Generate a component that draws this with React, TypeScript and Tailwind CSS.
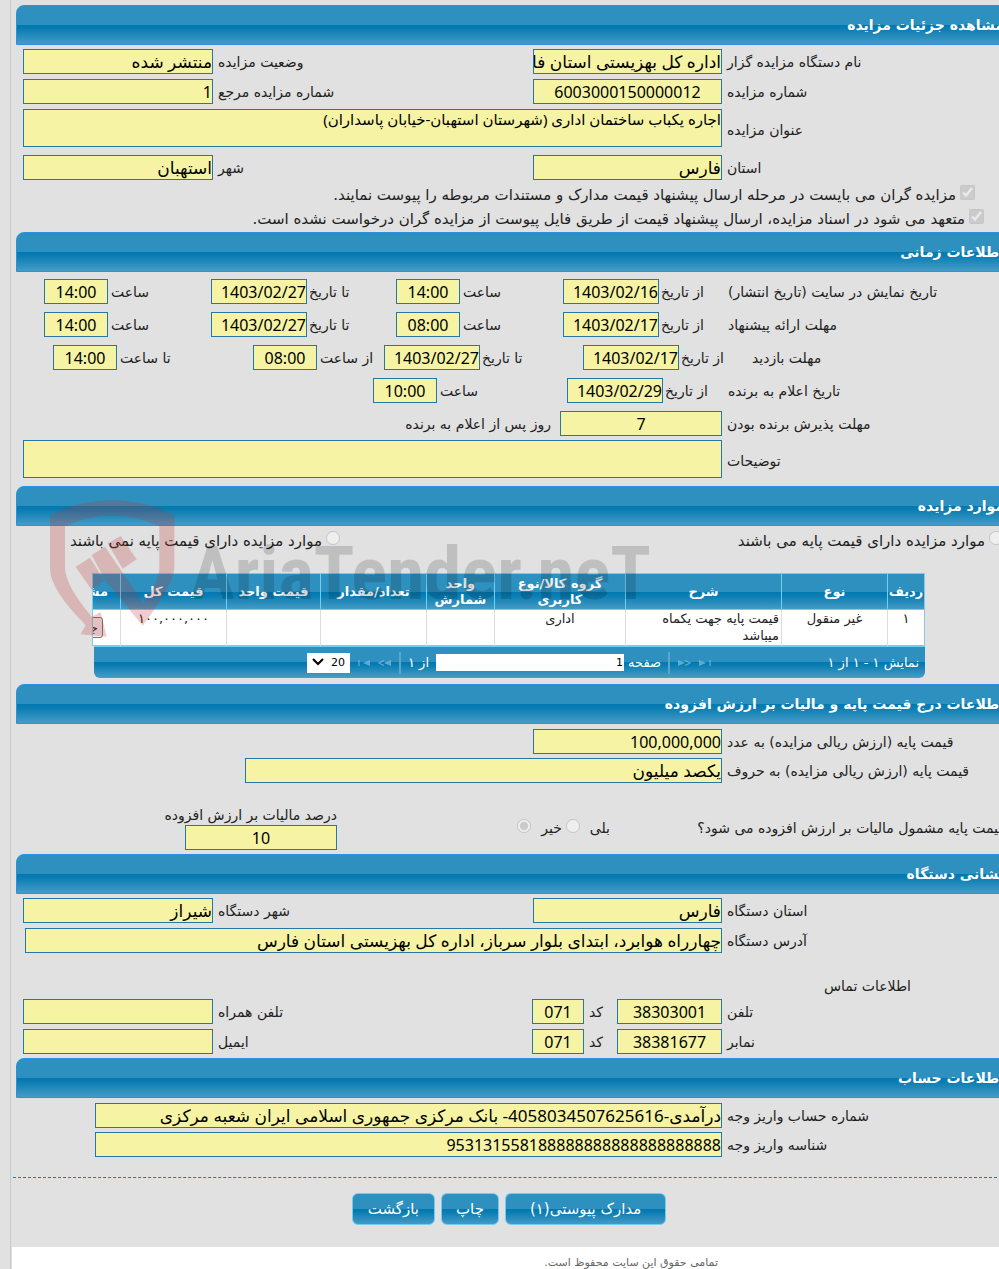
import { useId } from "react"
import clsx from "clsx"

const bar =
  "bg-[linear-gradient(to_bottom,#2e90bf_0%,#2e90bf_49%,#0078b0_50%,#0a7db3_60%,#4a9dc6_100%)] bg-origin-border"
const box =
  "block min-w-0 border border-[#2577a5] bg-[#f6f4a4] text-black outline-none font-['Noto_Sans','DejaVu_Sans',sans-serif]"

const Title = ({ children }: any) => (
  <h2
    dir="rtl"
    className={clsx(
      "h-10 rounded-tl-lg border border-[#2a91e0] pr-1.5 text-[14px] leading-[38px] font-bold whitespace-nowrap text-white",
      bar
    )}
  >
    {children}
  </h2>
)

// a value box with its caption on the right hand side
const Field = ({ label, value = "", width = "w-full", align = "text-right", size = "text-[16px]", gap = "gap-[5px]" }: any) => {
  const id = useId()
  return (
    <div className={clsx("flex items-center", gap)}>
      <input
        id={id}
        dir="rtl"
        readOnly
        value={value}
        className={clsx(box, "h-[25px] shrink-0", width, align, size)}
      />
      <label htmlFor={id} dir="rtl" className="whitespace-nowrap">
        {label}
      </label>
    </div>
  )
}

const Area = ({ label, value = "" }: any) => {
  const id = useId()
  return (
    <div className="grid grid-cols-[699fr_284fr] items-center gap-[5px]">
      <textarea
        id={id}
        dir="rtl"
        readOnly
        value={value}
        className={clsx(box, "h-[38px] w-full resize-none overflow-hidden text-[15px] leading-[18px]")}
      />
      <label htmlFor={id} dir="rtl" className="pt-1 text-left">
        {label}
      </label>
    </div>
  )
}

const Pair = ({ left, right }: any) => (
  <div className="grid grid-cols-[510fr_478fr]">
    <div>{left}</div>
    <div>{right}</div>
  </div>
)

const Time = ({ label, value }: any) => (
  <Field label={label} value={value} width="w-16" align="text-center" gap="gap-[3px]" />
)
const Day = ({ label, value }: any) => (
  <Field label={label} value={value} width="w-24" gap="gap-[2px]" />
)

const columns = [
  { name: "ردیف", width: "w-[37px]" },
  { name: "نوع", width: "w-[106px]" },
  { name: "شرح", width: "w-[156px]" },
  { name: "گروه کالا/نوع کاربری", width: "w-[131px]" },
  { name: "واحد شمارش", width: "w-[68px]" },
  { name: "تعداد/مقدار", width: "w-[106px]" },
  { name: "قیمت واحد", width: "w-[94px]" },
  { name: "قیمت کل", width: "w-[106px]" },
  { name: "مشخصات", width: "w-[28px]" },
]
const row = ["۱", "غیر منقول", "قیمت پایه جهت یکماه میباشد", "اداری", "", "", "", "۱۰۰,۰۰۰,۰۰۰"]

const Step = ({ label, flip, end }: any) => (
  <button type="button" disabled aria-label={label}>
    <svg viewBox="0 0 14 8" className={clsx("h-2 w-3.5", flip && "-scale-x-100")}>
      <path d="M13 1v6L6 4z" fill="#7fc0df" opacity=".7" />
      <path d={end ? "M2 1v6" : "M6 1.500L1 4l5 2.500"} fill="none" stroke="#7fc0df" strokeWidth="1.300" opacity=".7" />
    </svg>
  </button>
)

const Watermark = () => (
  <div className="pointer-events-none absolute top-[4px] left-[24px] flex">
    <svg viewBox="0 0 450 465" className="h-[155px] w-[150px]" fill="#be3232" opacity=".24">
      <path d="M30 75Q215-15 403 75V235Q400 285 308 407L195 270L155 195L195 170L310 340Q358 270 358 235V108Q215 45 75 108V235Q78 290 155 380L182 366L200 440L122 433L137 405Q30 300 30 235Z" />
      <path d="M107 230L150 203L193 272L155 300ZM203 160L242 138L290 208L248 236Z" />
    </svg>
    <span className="mt-[46px] font-['Liberation_Sans_Narrow','Roboto_Condensed',sans-serif] text-[75px] leading-none font-bold text-black/15">
      AriaTender.neT
    </span>
  </div>
)

const Check = ({ children, pad }: any) => (
  <label dir="rtl" className={clsx("flex h-6 items-center gap-1 text-[15px] whitespace-nowrap", pad)}>
    <input type="checkbox" disabled defaultChecked className="mb-1.5 size-[15px]" />
    {children}
  </label>
)

const Radio = ({ children, name }: any) => (
  <label dir="rtl" className="flex items-center gap-1 text-[15px] whitespace-nowrap">
    <input type="radio" name={name} disabled className="mb-1.5 size-[14px]" />
    {children}
  </label>
)

const Push = ({ children, pad }: any) => (
  <button
    type="button"
    className={clsx(
      "h-8 rounded-md border border-[#6fcdf2] text-[15px] text-white",
      bar,
      pad
    )}
  >
    {children}
  </button>
)

const App = () => {
  return (
    <div className="min-h-screen overflow-hidden bg-[#e1e1e1] pl-[10px] font-['DejaVu_Sans',sans-serif] text-[14px] leading-5 text-[#222]">
      <div className="border-l border-[#c8c8c8]">
        <main className="-mr-3 pt-[5px] pl-[5px]">
          <Title>مشاهده جزئیات مزایده</Title>
          <section className="flex flex-col gap-[5px] pt-1 pl-[7px]">
            <Pair
              left={<Field label="وضعیت مزایده" value="منتشر شده" width="w-[190px]" size="text-[17px]" />}
              right={<Field label="نام دستگاه مزایده گزار" value="اداره کل بهزیستی استان فارس" width="w-[189px]" size="text-[17px]" />}
            />
            <Pair
              left={<Field label="شماره مزایده مرجع" value="1" width="w-[190px]" />}
              right={<Field label="شماره مزایده" value="6003000150000012" width="w-[189px]" align="text-center" />}
            />
            <Area label="عنوان مزایده" value="اجاره یکباب ساختمان اداری (شهرستان استهبان-خیابان پاسداران)" />
            <div className="pt-[3px]">
              <Pair
                left={<Field label="شهر" value="استهبان" width="w-[190px]" size="text-[17px]" />}
                right={<Field label="استان" value="فارس" width="w-[189px]" size="text-[17px]" />}
              />
            </div>
          </section>
          <div className="pt-[3px] pb-px">
            <Check pad="pr-9">مزایده گران می بایست در مرحله ارسال پیشنهاد قیمت مدارک و مستندات مربوطه را پیوست نمایند.</Check>
            <Check pad="pr-[27px]">متعهد می شود در اسناد مزایده، ارسال پیشنهاد قیمت از طریق فایل پیوست از مزایده گران درخواست نشده است.</Check>
          </div>

          <Title>اطلاعات زمانی</Title>
          <section className="flex flex-col gap-2 pt-[7px] pl-[7px]">
            {[
              ["تاریخ نمایش در سایت (تاریخ انتشار)", "1403/02/16", "14:00"],
              ["مهلت ارائه پیشنهاد", "1403/02/17", "08:00"],
            ].map(([name, from, hour]) => (
              <div key={name} className="grid grid-cols-[167fr_185fr_167fr_165fr_283fr] items-center pl-[21px]">
                <Time label="ساعت" value="14:00" />
                <Day label="تا تاریخ" value="1403/02/27" />
                <Time label="ساعت" value={hour} />
                <Day label="از تاریخ" value={from} />
                <span dir="rtl" className="text-left">{name}</span>
              </div>
            ))}
            <div className="grid grid-cols-[200fr_131fr_199fr_169fr_259fr] items-center pl-[30px]">
              <Time label="تا ساعت" value="14:00" />
              <Time label="از ساعت" value="08:00" />
              <Day label="تا تاریخ" value="1403/02/27" />
              <Day label="از تاریخ" value="1403/02/17" />
              <span dir="rtl" className="text-left">مهلت بازدید</span>
            </div>
            <div className="grid grid-cols-[350fr_194fr_161fr_283fr] items-center">
              <span />
              <Time label="ساعت" value="10:00" />
              <Day label="از تاریخ" value="1403/02/29" />
              <span dir="rtl" className="text-left">تاریخ اعلام به برنده</span>
            </div>
            <div className="grid grid-cols-[528fr_451fr] items-center gap-[9px]">
              <span dir="rtl" className="text-right">روز پس از اعلام به برنده</span>
              <Field label="مهلت پذیرش برنده بودن" value="7" width="w-[162px]" align="text-center" />
            </div>
          </section>
          <div className="pt-1 pb-2 pl-[7px]">
            <Area label="توضیحات" />
          </div>

          <div className="relative">
            <Title>موارد مزایده</Title>
            <div dir="rtl" className="flex justify-between pt-[5px] pr-2 pl-[54px]">
              <div className="flex-[673]">
                <Radio name="base">موارد مزایده دارای قیمت پایه می باشند</Radio>
              </div>
              <div className="flex-[262]">
                <Radio name="base">موارد مزایده دارای قیمت پایه نمی باشند</Radio>
              </div>
            </div>
            <div className="mt-[22px] mr-[86px] mb-[6px] ml-[76px]">
              <table dir="rtl" className="w-full table-fixed border-collapse border border-[#8cc4e4] text-[13px]">
                <thead>
                  <tr className={clsx("h-9", bar)}>
                    {columns.map((c) => (
                      <th
                        key={c.name}
                        className={clsx("overflow-hidden border-b border-l border-[#6fd0f5] p-0 leading-4 font-bold text-white", c.width)}
                      >
                        {c.name === "مشخصات" ? <div className="pr-3 text-right whitespace-nowrap">{c.name}</div> : c.name}
                      </th>
                    ))}
                  </tr>
                </thead>
                <tbody>
                  <tr className="h-9 bg-white">
                    {row.map((cell, i) => (
                      <td
                        key={i}
                        className={clsx("border-l border-[#ddd] px-0.5 py-0 align-top leading-[17px]", i === 2 ? "text-right" : "text-center")}
                      >
                        {cell}
                      </td>
                    ))}
                    <td className="overflow-hidden p-0 pr-[17px] text-right">
                      <button type="button" className="h-[21px] rounded-[3px] border border-[#767676] bg-[#efefef] px-1 whitespace-nowrap">
                        جزئیات
                      </button>
                    </td>
                  </tr>
                </tbody>
              </table>
              <div className={clsx("ml-0.5 grid h-8 grid-cols-[1fr_auto_1fr] items-center rounded-b-md border-t border-[#6fd0f5] text-[13px] text-white", bar)}>
                <span />
                <div className="flex items-center gap-[7px]">
                  <div className="relative">
                    <select aria-label="تعداد در صفحه" className="h-5 w-[43px] appearance-none bg-white pl-6 text-[11px] text-black">
                      <option>20</option>
                    </select>
                    <svg viewBox="0 0 12 8" className="pointer-events-none absolute top-1.5 left-[5px] h-2 w-3">
                      <path d="M1 1l5 5 5-5" fill="none" stroke="#000" strokeWidth="2" />
                    </svg>
                  </div>
                  <Step label="صفحه اول" end />
                  <Step label="صفحه قبل" />
                  <i className="h-[22px] w-0.5 bg-[#5aa6cd]" />
                  <span dir="rtl">از ۱</span>
                  <label dir="rtl" className="flex items-center gap-1">
                    صفحه
                    <input readOnly value="1" className="h-[17px] w-[188px] bg-white px-px text-[11px] text-black" />
                  </label>
                  <i className="h-[22px] w-0.5 bg-[#5aa6cd]" />
                  <Step label="صفحه بعد" flip />
                  <Step label="صفحه آخر" flip end />
                </div>
                <span dir="rtl" className="pr-1.5">نمایش ۱ - ۱ از ۱</span>
              </div>
            </div>
            <Watermark />
          </div>

          <Title>اطلاعات درج قیمت پایه و مالیات بر ارزش افزوده</Title>
          <section className="flex flex-col gap-1 pt-[5px] pl-[7px]">
            <Pair right={<Field label="قیمت پایه (ارزش ریالی مزایده) به عدد" value="100,000,000" width="w-[189px]" />} />
            <div className="grid grid-cols-[222fr_766fr]">
              <span />
              <Field label="قیمت پایه (ارزش ریالی مزایده) به حروف" value="یکصد میلیون" width="w-[477px]" size="text-[17px]" />
            </div>
          </section>
          <div className="grid grid-cols-[321fr_273fr_401fr] pt-[23px] pb-1">
            <label dir="rtl" className="text-right leading-[19px]">
              درصد مالیات بر ارزش افزوده
              <input readOnly value="10" className={clsx(box, "h-[25px] w-[152px] text-center text-[16px]")} />
            </label>
            <div dir="rtl" className="flex items-center gap-1">
              <label className="flex items-center gap-2.5">
                بلی
                <input type="radio" name="vat" disabled className="mb-1 size-[14px]" />
              </label>
              <label className="flex items-center gap-2.5">
                خیر
                <input type="radio" name="vat" disabled defaultChecked className="mb-1 size-[14px]" />
              </label>
            </div>
            <span dir="rtl" className="self-center pr-1.5 text-right whitespace-nowrap">
              قیمت پایه مشمول مالیات بر ارزش افزوده می شود؟
            </span>
          </div>

          <Title>نشانی دستگاه</Title>
          <section className="flex flex-col gap-[5px] pt-1 pb-1 pl-[7px]">
            <Pair
              left={<Field label="شهر دستگاه" value="شیراز" width="w-[190px]" size="text-[17px]" />}
              right={<Field label="استان دستگاه" value="فارس" width="w-[189px]" size="text-[17px]" />}
            />
            <div className="pl-0.5">
              <Field label="آدرس دستگاه" value="چهارراه هوابرد، ابتدای بلوار سرباز، اداره کل بهزیستی استان فارس" width="w-[697px]" size="text-[17px]" />
            </div>
            <h3 dir="rtl" className="pt-5 pr-[100px] leading-4">اطلاعات تماس</h3>
            {[
              ["تلفن", "38303001", "تلفن همراه"],
              ["نمابر", "38381677", "ایمیل"],
            ].map(([name, number, other]) => (
              <div key={name} className="grid grid-cols-[509fr_85fr_394fr]">
                <Field label={other} width="w-[190px]" />
                <Field label="کد" value="071" width="w-[52px]" align="text-center" />
                <Field label={name} value={number} width="w-[105px]" align="text-center" />
              </div>
            ))}
          </section>

          <Title>اطلاعات حساب</Title>
          <section className="flex flex-col gap-1 pt-[5px] pl-[79px]">
            <Field label="شماره حساب واریز وجه" value="درآمدی-4058034507625616- بانک مرکزی جمهوری اسلامی ایران شعبه مرکزی" width="w-[627px]" size="text-[17px]" />
            <Field label="شناسه واریز وجه" value="953131558188888888888888888888" width="w-[627px]" />
          </section>
        </main>

        <div dir="rtl" className="mx-0.5 mt-5 flex justify-center gap-[6px] border-t border-dashed border-[#2577a5] pt-[15px] pb-[22px] pl-2">
          <Push pad="px-6">مدارک پیوستی(۱)</Push>
          <Push pad="px-3.5">چاپ</Push>
          <Push pad="px-[15px]">بازگشت</Push>
        </div>
        <footer dir="rtl" className="ml-px h-[22px] overflow-hidden bg-white pt-[6px] pr-[281px] text-[11px] text-[#666]">
          تمامی حقوق این سایت محفوظ است.
        </footer>
      </div>
    </div>
  )
}

export default App
